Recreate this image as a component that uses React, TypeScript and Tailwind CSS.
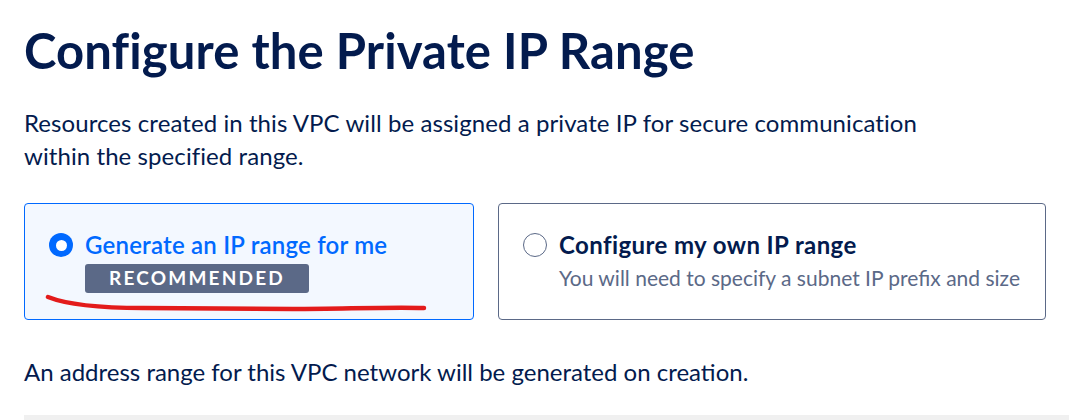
import React from "react";

export default function App() {
  return (
    <div className="w-[1069px] h-[420px] overflow-hidden bg-white font-['Lato','Liberation_Sans',sans-serif] text-[#031b4e]">
      <div className="pl-6 pt-[20px]">
        <h1 className="text-[49px] font-bold leading-[60px] tracking-[0.1px]">Configure the Private IP Range</h1>
        <p className="mt-[26px] text-[24px] leading-[33px] tracking-[0.08px] w-[900px]">
          Resources created in this VPC will be assigned a private IP for secure communication within the specified range.
        </p>
        <div className="mt-[31px] flex gap-[24px]">
          <div className="relative w-[450px] h-[117px] rounded-[4px] border border-[#0069ff] bg-[#f3f8ff] flex gap-[12px] pl-[24px] pt-[28px]">
            <div className="mt-[1px] w-[24px] h-[24px] rounded-full bg-[#0069ff] flex items-center justify-center shrink-0">
              <div className="w-[11px] h-[11px] rounded-full bg-white" />
            </div>
            <div className="flex flex-col items-start">
              <div className="text-[24px] leading-[26px] font-semibold tracking-[0.2px] text-[#0069ff]">Generate an IP range for me</div>
              <div className="mt-[6px] w-[224px] h-[29px] rounded-[3px] bg-[#5b6987] text-white text-[19px] font-bold tracking-[2.2px] flex items-center justify-center">RECOMMENDED</div>
            </div>
            <svg className="absolute left-[18px] top-[88px]" width="420" height="24" viewBox="0 0 420 24">
              <path d="M5 5 C 20 11, 45 16, 100 16 L 250 17 C 300 17, 340 15, 381 16" fill="none" stroke="#e31b1b" strokeWidth="4.5" strokeLinecap="round" />
            </svg>
          </div>
          <div className="w-[548px] h-[117px] rounded-[4px] border border-[#5b6987] bg-white flex gap-[12px] pl-[24px] pt-[28px]">
            <div className="mt-[1px] w-[24px] h-[24px] rounded-full border border-[#5b6987] bg-white shrink-0" />
            <div className="flex flex-col items-start">
              <div className="text-[24px] leading-[26px] font-bold tracking-[0.4px] text-[#031b4e]">Configure my own IP range</div>
              <div className="mt-[7px] text-[21px] leading-[26px] text-[#5b6987]">You will need to specify a subnet IP prefix and size</div>
            </div>
          </div>
        </div>
        <p className="mt-[38px] text-[24px] leading-[28px]">An address range for this VPC network will be generated on creation.</p>
        <div className="mt-[29px] h-[10px] bg-[#f0f0f0]" />
      </div>
    </div>
  );
}
